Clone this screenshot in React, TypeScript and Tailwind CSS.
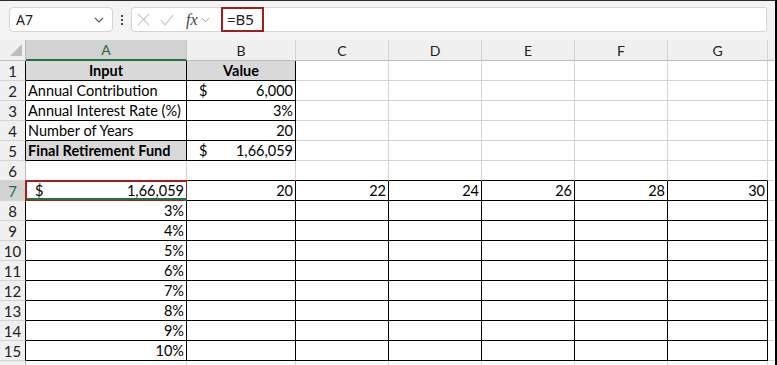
import React from 'react';

const COL_LETTERS = ['A', 'B', 'C', 'D', 'E', 'F', 'G'];

type Cell = {
  text?: string;
  cur?: string;
  curPad?: string;
  align?: 'left' | 'right' | 'center';
  bold?: boolean;
  fill?: boolean;
};

const data: Record<number, Record<number, Cell>> = {
  1: {
    0: { text: 'Input', align: 'center', bold: true, fill: true },
    1: { text: 'Value', align: 'center', bold: true, fill: true },
  },
  2: { 0: { text: 'Annual Contribution' }, 1: { text: '6,000', cur: '$', curPad: 'pl-[12px]', align: 'right' } },
  3: { 0: { text: 'Annual Interest Rate (%)' }, 1: { text: '3%', align: 'right' } },
  4: { 0: { text: 'Number of Years' }, 1: { text: '20', align: 'right' } },
  5: {
    0: { text: 'Final Retirement Fund', bold: true, fill: true },
    1: { text: '1,66,059', cur: '$', curPad: 'pl-[12px]', align: 'right' },
  },
  7: {
    0: { text: '1,66,059', cur: '$', curPad: 'pl-[9px]', align: 'right' },
    1: { text: '20', align: 'right' },
    2: { text: '22', align: 'right' },
    3: { text: '24', align: 'right' },
    4: { text: '26', align: 'right' },
    5: { text: '28', align: 'right' },
    6: { text: '30', align: 'right' },
  },
  8: { 0: { text: '3%', align: 'right' } },
  9: { 0: { text: '4%', align: 'right' } },
  10: { 0: { text: '5%', align: 'right' } },
  11: { 0: { text: '6%', align: 'right' } },
  12: { 0: { text: '7%', align: 'right' } },
  13: { 0: { text: '8%', align: 'right' } },
  14: { 0: { text: '9%', align: 'right' } },
  15: { 0: { text: '10%', align: 'right' } },
};

const ROWS = Array.from({ length: 16 }, (_, i) => i + 1);

function bordered(r: number, c: number) {
  if (r >= 1 && r <= 5 && c >= 0 && c <= 1) return true;
  if (r >= 7 && r <= 15 && c >= 0 && c <= 6) return true;
  return false;
}

function Chevron({ className }: { className?: string }) {
  return (
    <svg viewBox="0 0 10 6" className={className} fill="none" stroke="currentColor" strokeWidth="1.1">
      <path d="M1 1l4 4 4-4" />
    </svg>
  );
}

function Toolbar() {
  return (
    <div className="flex h-[39px] items-start bg-[#f3f3f3] pt-[6px]">
      {/* Name box */}
      <div className="ml-[9px] flex h-[25px] w-[104px] items-center justify-between rounded-[4px] border border-[#d5d5d5] bg-white pl-[6px] pr-[8px]">
        <span className="text-[14px] text-[#222]" style={{ fontFamily: '"Noto Sans", sans-serif' }}>A7</span>
        <Chevron className="h-[6px] w-[10px] text-[#555]" />
      </div>
      {/* dots */}
      <div className="ml-[7px] flex h-[25px] w-[4px] flex-col items-center justify-center gap-[2px]">
        <div className="h-[2px] w-[2px] bg-[#444]" />
        <div className="h-[2px] w-[2px] bg-[#444]" />
        <div className="h-[2px] w-[2px] bg-[#444]" />
      </div>
      {/* function buttons */}
      <div className="ml-[7px] flex h-[25px] w-[90px] items-center rounded-l-[4px] border border-r-0 border-[#d5d5d5] bg-white">
        <svg viewBox="0 0 14 14" className="ml-[5px] h-[13px] w-[13px]" stroke="#c4c4c4" strokeWidth="1.2" fill="none">
          <path d="M1 1l12 12M13 1L1 13" />
        </svg>
        <svg viewBox="0 0 14 12" className="ml-[10px] h-[12px] w-[14px]" stroke="#c4c4c4" strokeWidth="1.2" fill="none">
          <path d="M1 6l4 5 8-10" />
        </svg>
        <span
          className="ml-[12px] text-[16px] italic leading-none text-[#444]"
          style={{ fontFamily: '"Liberation Serif", serif' }}
        >
          fx
        </span>
        <Chevron className="ml-[3px] h-[6px] w-[9px] text-[#9a9a9a]" />
      </div>
      {/* formula input */}
      <div className="flex h-[25px] w-[546px] items-stretch rounded-r-[2px] border border-l-0 border-[#d5d5d5] bg-white">
        <div
          className="-my-px flex w-[43px] items-center border-2 border-[#a51c1c] pl-[4px] text-[15px] text-[#222]"
          style={{ fontFamily: '"Noto Sans", sans-serif' }}
        >
          =B5
        </div>
      </div>
    </div>
  );
}

function HeaderRow() {
  return (
    <>
      <div className="relative h-[21px] border-b border-r border-[#bdbdbd] bg-[#f0f0f0]">
        <svg viewBox="0 0 12 12" className="absolute bottom-[4px] right-[3px] h-[12px] w-[12px]">
          <path d="M12 0V12H0z" fill="#bdbdbd" />
        </svg>
      </div>
      {COL_LETTERS.map((l, i) =>
        i === 0 ? (
          <div
            key={l}
            className="flex h-[21px] items-center justify-center border-b-2 border-r border-b-[#217346] border-r-[#c8c8c8] bg-[#d2d2d2] text-[14px] text-[#1d6b3f]"
          >
            {l}
          </div>
        ) : (
          <div
            key={l}
            className="flex h-[21px] items-center justify-center border-b border-r border-b-[#bdbdbd] border-r-[#d4d4d4] bg-[#f0f0f0] text-[14px] text-[#222]"
          >
            {l}
          </div>
        )
      )}
      <div className="h-[21px] border-b border-[#bdbdbd] bg-[#f0f0f0]" />
    </>
  );
}

function SheetRow({ r }: { r: number }) {
  const rowData = data[r] || {};
  return (
    <>
      <div
        className={
          'flex h-[20px] items-center justify-center border-b border-r pt-px text-[15px] ' +
          (r === 7 ? 'bg-[#d2d2d2] text-[#1d6b3f] ' : 'bg-[#f0f0f0] text-[#222] ') +
          'border-b-[#d4d4d4] ' +
          (bordered(r, 0) ? 'border-r-black' : 'border-r-[#bdbdbd]')
        }
      >
        {r <= 15 ? r : ''}
      </div>
      {COL_LETTERS.map((_, c) => {
        const cell = rowData[c];
        const rb = bordered(r, c) || bordered(r, c + 1);
        const bb = bordered(r, c) || bordered(r + 1, c);
        const cls =
          'relative flex h-[20px] items-center border-b border-r pt-px text-[14.5px] text-black ' +
          (rb ? 'border-r-black ' : 'border-r-[#d4d4d4] ') +
          (bb ? 'border-b-black ' : 'border-b-[#d4d4d4] ') +
          (cell?.fill ? 'bg-[#d9d9d9] ' : 'bg-white ') +
          (cell?.bold ? 'font-bold ' : '') +
          (cell?.align === 'center' ? 'justify-center ' : cell?.align === 'right' ? 'justify-end pr-[2px] ' : 'pl-[2px] ');
        return (
          <div key={c} className={cls}>
            {cell?.cur && <span className={'absolute left-0 ' + cell.curPad}>{cell.cur}</span>}
            {cell?.text}
            {r === 7 && c === 0 && (
              <div className="absolute -bottom-[2px] -left-px -right-[2px] -top-px border-2 border-[#a51c1c]">
                <div className="absolute bottom-0 left-0 right-0 h-[2px] bg-[#217346]" />
                <div className="absolute -bottom-[2px] -right-[2px] h-[4px] w-[4px] bg-[#217346]" />
              </div>
            )}
          </div>
        );
      })}
      <div className="h-[20px] border-b border-[#d4d4d4] bg-white" />
    </>
  );
}

export default function App() {
  return (
    <div className="h-[365px] w-[777px] overflow-hidden border-r-2 border-t border-r-black border-t-[#2a2a2a] bg-white" style={{ fontFamily: 'Lato, "Liberation Sans", sans-serif' }}>
      <Toolbar />
      <div className="grid grid-cols-[26px_161px_109px_93px_93px_93px_93px_100px_1fr]">
        <HeaderRow />
        {ROWS.map((r) => (
          <SheetRow key={r} r={r} />
        ))}
      </div>
    </div>
  );
}
